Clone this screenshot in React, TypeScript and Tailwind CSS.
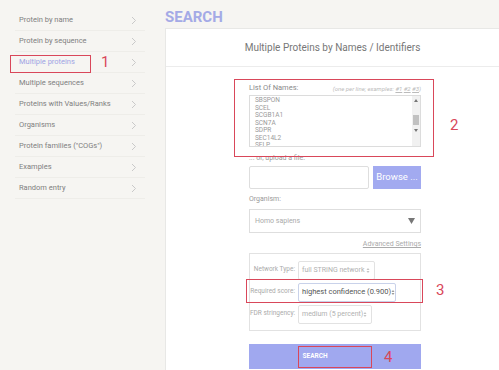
import React from "react";

const menu = [
  "Protein by name",
  "Protein by sequence",
  "Multiple proteins",
  "Multiple sequences",
  "Proteins with Values/Ranks",
  "Organisms",
  "Protein families (\"COGs\")",
  "Examples",
  "Random entry",
];

const names = ["SBSPON", "SCEL", "SCGB1A1", "SCN7A", "SDPR", "SEC14L2", "SELP"];

function Chevron() {
  return (
    <svg width="6" height="9" viewBox="0 0 6 9" className="shrink-0">
      <path d="M1 1 L4.5 4.5 L1 8" fill="none" stroke="#c4c4c4" strokeWidth="0.9" />
    </svg>
  );
}

function Updown({ color = "#aaa" }: { color?: string }) {
  return (
    <svg width="4" height="7" viewBox="0 0 4 7" className="shrink-0">
      <path d="M0.5 3 L2 1 L3.5 3 Z M0.5 4 L2 6 L3.5 4 Z" fill={color} />
    </svg>
  );
}

function SettingRow({
  label,
  value,
  width,
  active,
}: {
  label: string;
  value: string;
  width: string;
  active?: boolean;
}) {
  return (
    <div className="flex items-center h-[22px]">
      <div className="w-[48px] text-right text-[6.5px] text-[#aaa] pr-[3px] whitespace-nowrap">{label}</div>
      <div
        className={`${width} h-[19px] flex items-center justify-between pl-[3px] pr-[4px] border rounded-[2px] ${
          active ? "border-[#c9d2ea] text-[#555] text-[7.5px]" : "border-[#e2e2e2] text-[#b0b0b0] text-[7px]"
        }`}
      >
        <span className="whitespace-nowrap">{value}</span>
        <Updown color={active ? "#999" : "#c4c4c4"} />
      </div>
    </div>
  );
}

export default function App() {
  return (
    <div
      className="relative w-[499px] h-[370px] overflow-hidden bg-[#f6f5f2] flex"
      style={{ fontFamily: "Roboto, 'Liberation Sans', sans-serif" }}
    >
      {/* sidebar */}
      <div className="w-[165px] shrink-0 pt-[10px] pl-[15px] pr-[20px]">
        {menu.map((m) => (
          <div
            key={m}
            className="h-[21px] flex items-center justify-between pl-[4px] pr-[8px] border-b border-[#eeede9]"
          >
            <span className={`text-[7.5px] ${m === "Multiple proteins" ? "text-[#9ea4e4]" : "text-[#808080]"}`}>
              {m}
            </span>
            <Chevron />
          </div>
        ))}
      </div>

      {/* main */}
      <div className="flex-1 flex flex-col">
        <div className="h-[28px] pt-[9px] text-[15px] leading-[16px] font-bold text-[#a4aae6]">SEARCH</div>
        <div className="flex-1 bg-white border-l border-t border-[#e8e8e6]">
          <div className="h-[38px] border-b border-[#ececec] flex items-center justify-center text-[10px] text-[#777]">
            Multiple Proteins by Names / Identifiers
          </div>
          <div className="pl-[83px] pt-[16px] w-[255px]">
            <div className="flex items-end justify-between h-[10px]">
              <span className="text-[7.5px] text-[#8a8a8a]">List Of Names:</span>
              <span className="text-[6px] text-[#bbb] italic">
                (one per line; examples: <span className="underline">#1</span>{" "}
                <span className="underline">#2</span> <span className="underline">#3</span>)
              </span>
            </div>
            <div className="mt-[2px] h-[52px] border border-[#dcdcdc] flex overflow-hidden">
              <div className="flex-1 pl-[5px] pt-[1px] text-[6.5px] leading-[7.5px] text-[#9a9a9a]">
                {names.map((n) => (
                  <div key={n}>{n}</div>
                ))}
              </div>
              <div className="w-[8px] bg-[#f1f1f1] flex flex-col items-center pt-[3px]">
                <svg width="4" height="3" viewBox="0 0 4 3">
                  <path d="M0 3 L2 0 L4 3 Z" fill="#777" />
                </svg>
                <div className="w-[6px] h-[10px] bg-[#c1c1c1] mt-[13px]" />
                <svg width="4" height="3" viewBox="0 0 4 3" className="mt-[4px]">
                  <path d="M0 0 L2 3 L4 0 Z" fill="#777" />
                </svg>
              </div>
            </div>

            <div className="mt-[7px] text-[7px] text-[#999] h-[9px] leading-[9px]">... or, upload a file:</div>
            <div className="mt-[3px] flex gap-[4px] h-[23px]">
              <div className="w-[120px] border border-[#dedede] rounded-[2px]" />
              <div className="flex-1 bg-[#a2aaf0] text-white text-[9.5px] flex items-center justify-center">
                Browse ...
              </div>
            </div>

            <div className="mt-[6px] text-[7px] text-[#999] h-[9px] leading-[9px]">Organism:</div>
            <div className="mt-[5px] h-[24px] border border-[#dedede] flex items-center justify-between pl-[5px] pr-[5px]">
              <span className="text-[7px] text-[#aaa]">Homo sapiens</span>
              <svg width="7" height="6" viewBox="0 0 7 6">
                <path d="M0 0 L7 0 L3.5 6 Z" fill="#777" />
              </svg>
            </div>

            <div className="mt-[7px] text-right text-[7px] text-[#aaa] underline h-[9px] leading-[9px]">
              Advanced Settings
            </div>
            <div className="mt-[4px] h-[78px] border border-[#e2e2e2] pt-[5px] flex flex-col">
              <SettingRow label="Network Type:" value="full STRING network" width="w-[77px]" />
              <SettingRow label="Required score:" value="highest confidence (0.900)" width="w-[98px]" active />
              <SettingRow label="FDR stringency:" value="medium (5 percent)" width="w-[74px]" />
            </div>

            <div className="mt-[13px] h-[25px] bg-[#a0a8ef] flex items-center justify-center pr-[40px] text-white text-[6.5px] font-bold">
              SEARCH
            </div>
          </div>
        </div>
      </div>

      {/* annotations */}
      <div className="absolute left-[10px] top-[55px] w-[81px] h-[18px] border border-[#d9475a]" />
      <div className="absolute left-[101px] top-[53px] text-[15px] leading-[18px] text-[#d9475a]">1</div>
      <div className="absolute left-[234px] top-[79px] w-[200px] h-[78px] border border-[#d9475a]" />
      <div className="absolute left-[450px] top-[116px] text-[15px] leading-[18px] text-[#d9475a]">2</div>
      <div className="absolute left-[246px] top-[279px] w-[177px] h-[24px] border border-[#d9475a]" />
      <div className="absolute left-[436px] top-[281px] text-[15px] leading-[18px] text-[#d9475a]">3</div>
      <div className="absolute left-[298px] top-[346px] w-[74px] h-[22px] border border-[#d9475a]" />
      <div className="absolute left-[384px] top-[348px] text-[15px] leading-[18px] text-[#d9475a]">4</div>
    </div>
  );
}
